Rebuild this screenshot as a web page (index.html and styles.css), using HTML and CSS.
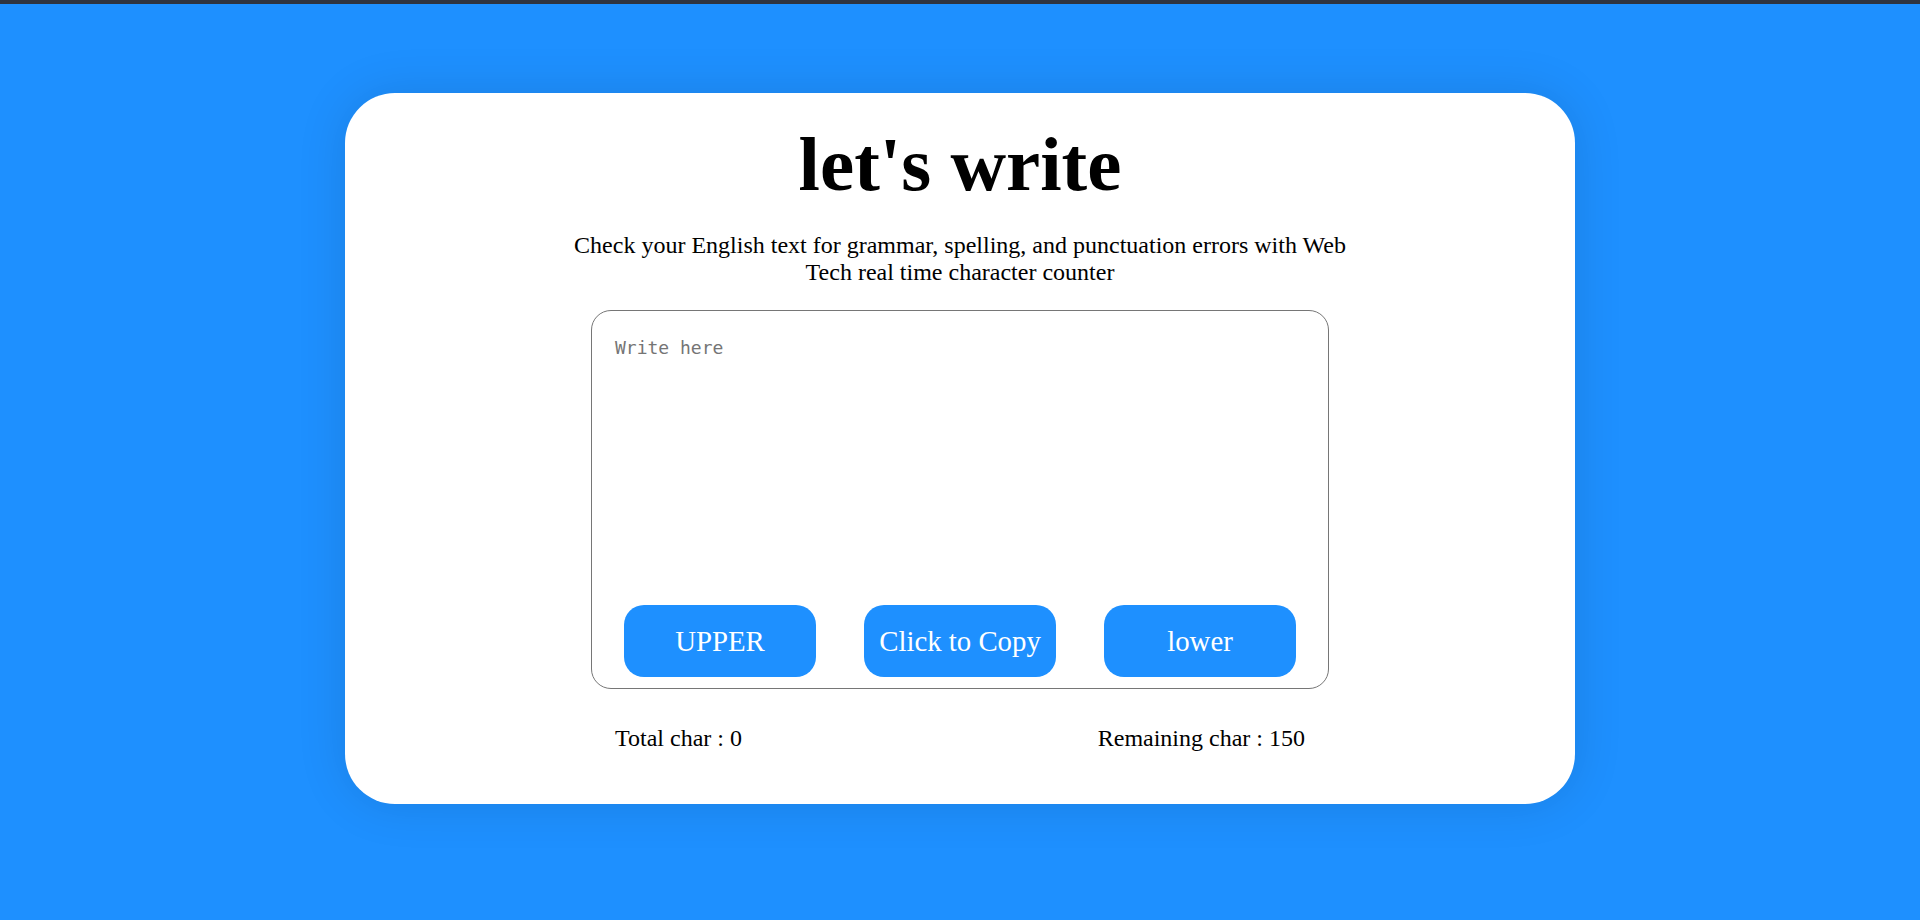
FILE: index.html
```html
<!DOCTYPE html>
<html lang="en">
<head>
<meta charset="utf-8">
<title>let's write</title>
<link rel="stylesheet" href="styles.css">
</head>
<body>
<div class="topbar"></div>
<main class="card">
  <h1 class="title">let's write</h1>
  <p class="subtitle">Check your English text for grammar, spelling, and punctuation errors with Web Tech real time character counter</p>
  <div class="editor">
    <textarea class="input" placeholder="Write here"></textarea>
    <div class="actions">
      <button class="btn">UPPER</button>
      <button class="btn">Click to Copy</button>
      <button class="btn">lower</button>
    </div>
  </div>
  <div class="counters">
    <span class="count">Total char : 0</span>
    <span class="count">Remaining char : 150</span>
  </div>
</main>
</body>
</html>
```

FILE: styles.css
```css
html, body {
  margin: 0;
  padding: 0;
}
body {
  background: #1e90ff;
  font-family: "Liberation Serif", "Times New Roman", serif;
  color: #000;
  height: 920px;
  overflow: hidden;
}
.topbar {
  height: 4px;
  background: #2f3440;
}
.card {
  width: 1230px;
  height: 711px;
  box-sizing: border-box;
  margin: 89px auto 0;
  background: #fff;
  border-radius: 50px;
  box-shadow: 0 0 50px rgba(0, 0, 0, 0.12);
  padding-top: 27px;
  display: flex;
  flex-direction: column;
  align-items: center;
}
.title {
  margin: 0;
  font-size: 77px;
  font-weight: bold;
  line-height: normal;
}
.subtitle {
  margin: 23px 0 0;
  width: 800px;
  text-align: center;
  font-size: 24px;
  line-height: normal;
}
.editor {
  margin-top: 24px;
  width: 738px;
  height: 379px;
  box-sizing: border-box;
  border: 1px solid #767676;
  border-radius: 20px;
  display: flex;
  flex-direction: column;
  overflow: hidden;
}
.input {
  flex: 1;
  border: none;
  outline: none;
  resize: none;
  padding: 26px 23px 22px;
  font-family: "DejaVu Sans Mono", monospace;
  font-size: 18px;
  background: transparent;
}
.input::placeholder {
  color: #757575;
}
.actions {
  display: flex;
  justify-content: center;
  gap: 48px;
  padding-bottom: 11px;
}
.btn {
  width: 192px;
  height: 72px;
  border: none;
  border-radius: 20px;
  background: #1e90ff;
  color: #fff;
  font-family: "Liberation Serif", "Times New Roman", serif;
  font-size: 28.8px;
  padding: 0;
  cursor: pointer;
}
.counters {
  margin-top: 36px;
  width: 738px;
  box-sizing: border-box;
  padding: 0 24px;
  display: flex;
  justify-content: space-between;
}
.count {
  font-size: 24px;
  line-height: normal;
}
```
